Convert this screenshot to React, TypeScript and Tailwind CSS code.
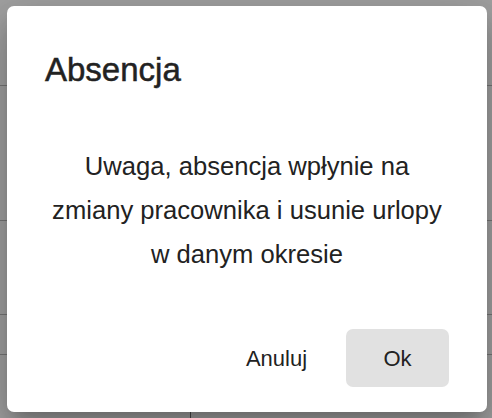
import React from "react";

export default function App() {
  return (
    <div className="relative w-[492px] h-[418px] overflow-hidden bg-white" style={{ fontFamily: '"Liberation Sans", Arial, sans-serif' }}>
      {/* page behind the dialog */}
      <div className="flex flex-col w-full">
        <div className="h-[86px] border-b border-[#bbbbbb]" />
        <div className="h-[135px] border-b border-[#bbbbbb]" />
        <div className="h-[94px] border-b border-[#bbbbbb]" />
        <div className="h-[40px] border-b border-[#bbbbbb]" />
        <div className="flex h-[63px]">
          <div className="w-[191px] border-r border-[#777777]" />
        </div>
      </div>

      {/* backdrop + dialog */}
      <div className="absolute inset-0 bg-black/[0.37] pl-[7px] pt-[6px]">
        <div className="flex h-[406px] w-[480px] flex-col rounded-[7px] bg-white px-[38px] pt-[44px] pb-[25px] text-[#222222] shadow-[0_11px_15px_-7px_rgba(0,0,0,0.2),0_24px_38px_3px_rgba(0,0,0,0.14),0_9px_46px_8px_rgba(0,0,0,0.12)]">
          <h2 className="h-[40px] text-[33px] leading-[40px] font-normal [-webkit-text-stroke:0.5px_#222222]">Absencja</h2>
          <p className="mt-[54px] text-center text-[25.6px] leading-[44px]">
            Uwaga, absencja wpłynie na
            <br />
            zmiany pracownika i usunie urlopy
            <br />
            w danym okresie
          </p>
          <div className="mt-[53px] flex justify-end gap-[18px]">
            <button className="flex h-[58px] w-[103px] items-center justify-center rounded-[7px] text-[22px] text-[#222222]">
              Anuluj
            </button>
            <button className="flex h-[58px] w-[103px] items-center justify-center rounded-[7px] bg-[#e1e1e1] text-[22px] text-[#222222]">
              Ok
            </button>
          </div>
        </div>
      </div>
    </div>
  );
}
